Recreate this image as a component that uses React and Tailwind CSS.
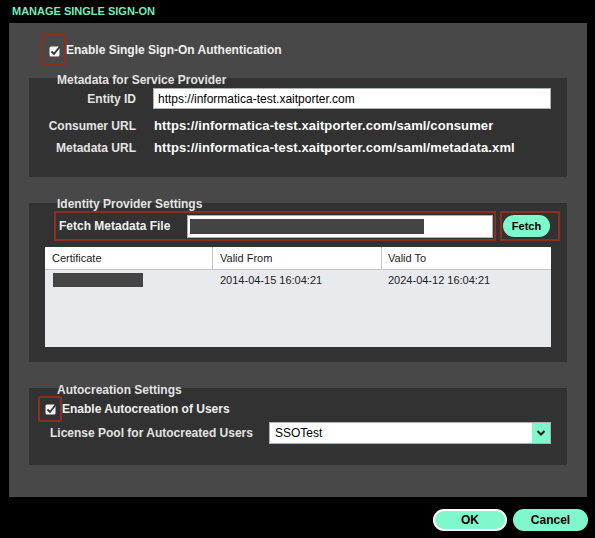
import React from 'react';

const font = "font-['Liberation_Sans',Arial,sans-serif]";

const CheckIcon = () => (
  <svg width="12" height="12" viewBox="0 0 12 12">
    <rect x="0.5" y="1.5" width="10" height="10" rx="1.5" fill="#f4f4f4" />
    <path d="M2.5 6.5 L5 9 L10.5 2" fill="none" stroke="#333" strokeWidth="1.8" />
  </svg>
);

const Chevron = () => (
  <svg width="10" height="8" viewBox="0 0 10 8">
    <path d="M1.5 2 L5 5.5 L8.5 2" fill="none" stroke="#222" strokeWidth="2" />
  </svg>
);

const SectionTitle = ({ children, className = '' }) => (
  <div className={`ml-[28px] text-[12px] leading-[14px] font-bold text-[#e4e4e4] ${className}`}>{children}</div>
);

const App = () => {
  return (
    <div className={`${font} bg-black w-[595px] h-[538px] pt-[5px] overflow-hidden`}>
      {/* Header */}
      <div className="pl-[12px] text-[11px] leading-[12px] font-bold text-[#72edbb]">MANAGE SINGLE SIGN-ON</div>

      {/* Panel */}
      <div className="mt-[6px] ml-[9px] w-[578px] h-[474px] bg-[#484848] px-[20px] pt-[11px] flex flex-col">
        <div className="flex items-center">
          <div className="ml-[12px] w-[25px] h-[31px] border-2 border-[#8c2f1f] rounded-[2px] flex items-center justify-center pl-[2px] pt-[2px]">
            <CheckIcon />
          </div>
          <span className="text-[12px] font-bold text-[#f0f0f0]">Enable Single Sign-On Authentication</span>
        </div>

        {/* Metadata for Service Provider */}
        <div className="mt-[13px] h-[99px] bg-[#323232] flex flex-col">
          <SectionTitle className="-mt-[5px]">Metadata for Service Provider</SectionTitle>
          <div className="mt-[1px] flex items-center h-[21px] pl-[11px]">
            <div className="w-[96px] text-right text-[12px] font-bold text-[#e4e4e4]">Entity ID</div>
            <div className="ml-[17px] w-[398px] h-[21px] bg-white border border-[#a9b0b6] flex items-center pl-[4px] text-[12px] text-black">
              https://informatica-test.xaitporter.com
            </div>
          </div>
          <div className="mt-[8px] flex items-center h-[18px] pl-[11px]">
            <div className="w-[96px] text-right text-[12px] font-bold text-[#e4e4e4]">Consumer URL</div>
            <div className="ml-[18px] text-[13px] tracking-[0.12px] font-bold text-white">https://informatica-test.xaitporter.com/saml/consumer</div>
          </div>
          <div className="mt-[4px] flex items-center h-[18px] pl-[11px]">
            <div className="w-[96px] text-right text-[12px] font-bold text-[#e4e4e4]">Metadata URL</div>
            <div className="ml-[18px] text-[13px] tracking-[0.12px] font-bold text-white">https://informatica-test.xaitporter.com/saml/metadata.xml</div>
          </div>
        </div>

        {/* Identity Provider Settings */}
        <div className="mt-[26px] h-[159px] bg-[#323232] flex flex-col">
          <SectionTitle className="-mt-[6px]">Identity Provider Settings</SectionTitle>
          <div className="flex">
            <div className="ml-[25px] w-[442px] h-[30px] border-2 border-[#8c2f1f] flex items-center justify-between pl-[3px] pr-[1px]">
              <span className="text-[12px] font-bold text-[#f0f0f0]">Fetch Metadata File</span>
              <div className="w-[306px] h-[23px] bg-white border border-[#a9b0b6] flex items-center pl-[2px]">
                <div className="w-[234px] h-[15px] bg-[#444]"></div>
              </div>
            </div>
            <div className="ml-[4px] w-[60px] h-[30px] border-2 border-[#8c2f1f] flex items-center pl-[1px]">
              <button className="w-[47px] h-[22px] rounded-full bg-[#7ff8cb] text-[11px] font-bold text-black">Fetch</button>
            </div>
          </div>

          {/* Certificate table */}
          <div className="mt-[6px] ml-[16px] w-[506px] h-[100px] bg-[#e9eaee] text-[11px] text-[#222]">
            <div className="grid grid-cols-[168px_169px_169px] h-[23px] bg-white border-b border-[#c4c4c4]">
              <div className="pl-[7px] flex items-center border-r border-[#c4c4c4]">Certificate</div>
              <div className="pl-[7px] flex items-center border-r border-[#c4c4c4]">Valid From</div>
              <div className="pl-[6px] flex items-center">Valid To</div>
            </div>
            <div className="grid grid-cols-[168px_169px_169px] h-[20px]">
              <div className="pl-[8px] flex items-center">
                <div className="w-[90px] h-[14px] bg-[#444]"></div>
              </div>
              <div className="pl-[7px] flex items-center">2014-04-15 16:04:21</div>
              <div className="pl-[6px] flex items-center">2024-04-12 16:04:21</div>
            </div>
          </div>
        </div>

        {/* Autocreation Settings */}
        <div className="mt-[26px] h-[77px] bg-[#323232] flex flex-col">
          <SectionTitle className="-mt-[5px]">Autocreation Settings</SectionTitle>
          <div className="-mt-[1px] flex items-center">
            <div className="ml-[9px] w-[24px] h-[26px] border-2 border-[#8c2f1f] rounded-[2px] flex items-center justify-center pl-[1px]">
              <CheckIcon />
            </div>
            <span className="text-[12px] font-bold text-[#f0f0f0]">Enable Autocreation of Users</span>
          </div>
          <div className="flex items-center h-[22px]">
            <span className="pl-[21px] text-[12px] font-bold text-[#e4e4e4]">License Pool for Autocreated Users</span>
            <div className="ml-auto mr-[16px] w-[282px] h-[22px] bg-white border border-[#a9b0b6] flex items-center">
              <span className="flex-1 pl-[5px] text-[12px] text-black">SSOTest</span>
              <div className="w-[18px] h-full bg-[#7ff8cb] flex items-center justify-center">
                <Chevron />
              </div>
            </div>
          </div>
        </div>
      </div>

      {/* Footer buttons */}
      <div className="mt-[12px] flex justify-end gap-[6px] pr-[7px]">
        <button className="w-[74px] h-[22px] rounded-full bg-[#7ff8cb] border-2 border-white text-[12px] font-bold text-black">OK</button>
        <button className="w-[75px] h-[22px] rounded-full bg-[#7ff8cb] text-[12px] font-bold text-black">Cancel</button>
      </div>
    </div>
  );
};

export default App;
